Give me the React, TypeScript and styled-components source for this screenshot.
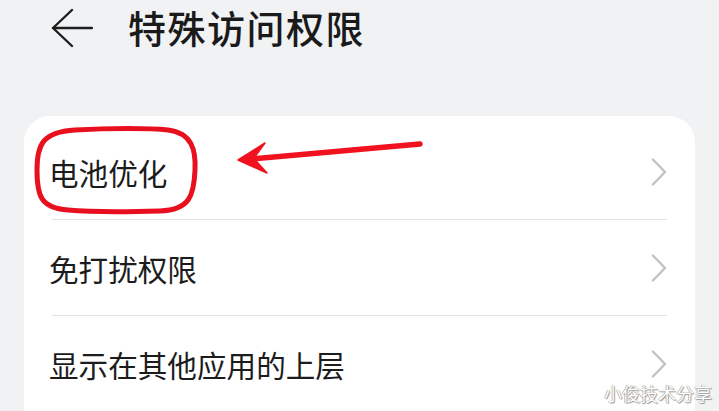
import React from "react";
import styled, { createGlobalStyle } from "styled-components";

const Global = createGlobalStyle`
  html, body { margin: 0; padding: 0; background: #f1f2f4; overflow: hidden; }
  body { font-family: "Noto Sans CJK SC", "Noto Sans", sans-serif; }
`;

const Page = styled.div`
  position: relative;
  width: 719px;
  height: 411px;
  overflow: hidden;
  background: #f1f2f4;
`;

const Header = styled.header`
  display: flex;
  align-items: center;
  height: 56px;
  padding-left: 51px;
  gap: 35px;
`;

const BackButton = styled.button`
  display: flex;
  align-items: center;
  justify-content: center;
  width: 42px;
  height: 40px;
  padding: 0;
  border: 0;
  background: none;
`;

const Title = styled.h1`
  margin: -3px 0 0;
  font-size: 38px;
  font-weight: 500;
  letter-spacing: 1.5px;
  color: #1a1a1a;
  line-height: 1;
`;

const Card = styled.section`
  margin: 60px 24px 0;
  padding-top: 8px;
  background: #ffffff;
  border-radius: 26px 26px 0 0;
  height: 400px;
`;

const Row = styled.div<{ $last?: boolean }>`
  position: relative;
  display: flex;
  align-items: center;
  justify-content: space-between;
  height: 96px;
  margin: 0 28px 0 25px;
  &::after {
    content: "";
    display: ${(p) => (p.$last ? "none" : "block")};
    position: absolute;
    left: 3px;
    right: 0;
    bottom: 0;
    height: 1.5px;
    background: #e4e4e6;
  }
`;

const Label = styled.span`
  font-size: 29.6px;
  color: #1c1c1c;
  line-height: 1;
  margin-top: 2px;
`;

const Chevron = () => (
  <svg width="16" height="28" viewBox="0 0 16 28" fill="none">
    <path d="M2 1.5 L14 14 L2 26.5" stroke="#c2c2c4" strokeWidth="2.4" strokeLinecap="round" strokeLinejoin="round" />
  </svg>
);

const Annotation = styled.svg`
  position: absolute;
  left: 0;
  top: 0;
  pointer-events: none;
`;

const Watermark = styled.div`
  position: absolute;
  right: 7px;
  bottom: 9px;
  font-size: 18px;
  color: #ffffff;
  text-shadow: 0 0 1px #8a8a8a, 1px 1px 1px #9a9a9a, -0.5px -0.5px 0.5px #a0a0a0;
  line-height: 1;
`;

const items = ["电池优化", "免打扰权限", "显示在其他应用的上层"];

export default function App() {
  return (
    <Page>
      <Global />
      <Header>
        <BackButton aria-label="back">
          <svg width="42" height="40" viewBox="0 0 42 40" fill="none">
            <path d="M21 2 L2 20 L21 38 M2 20 L41 20" stroke="#1e1e1e" strokeWidth="2.4" strokeLinecap="round" strokeLinejoin="round" />
          </svg>
        </BackButton>
        <Title>特殊访问权限</Title>
      </Header>
      <Card>
        {items.map((t, i) => (
          <Row key={t} $last={i === items.length - 1}>
            <Label>{t}</Label>
            <Chevron />
          </Row>
        ))}
      </Card>
      <Annotation width="719" height="411" viewBox="0 0 719 411">
        <path
          d="M75 130 C110 128 150 128 168 130 C192 133 196 150 195 170 C194 195 190 210 160 211 C125 212 90 212 68 210 C40 208 37 195 37 170 C37 145 42 132 75 130 Z"
          stroke="#e8101f"
          strokeWidth="5"
          fill="none"
        />
        <path d="M420 144 L252 159" stroke="#f0121f" strokeWidth="5.5" strokeLinecap="round" />
        <path d="M238 160 L265 143 L254 158 L257 162 L267 173 Z" fill="#f0121f" stroke="#f0121f" strokeWidth="1.5" strokeLinejoin="round" />
      </Annotation>
      <Watermark>小俊技术分享</Watermark>
    </Page>
  );
}
